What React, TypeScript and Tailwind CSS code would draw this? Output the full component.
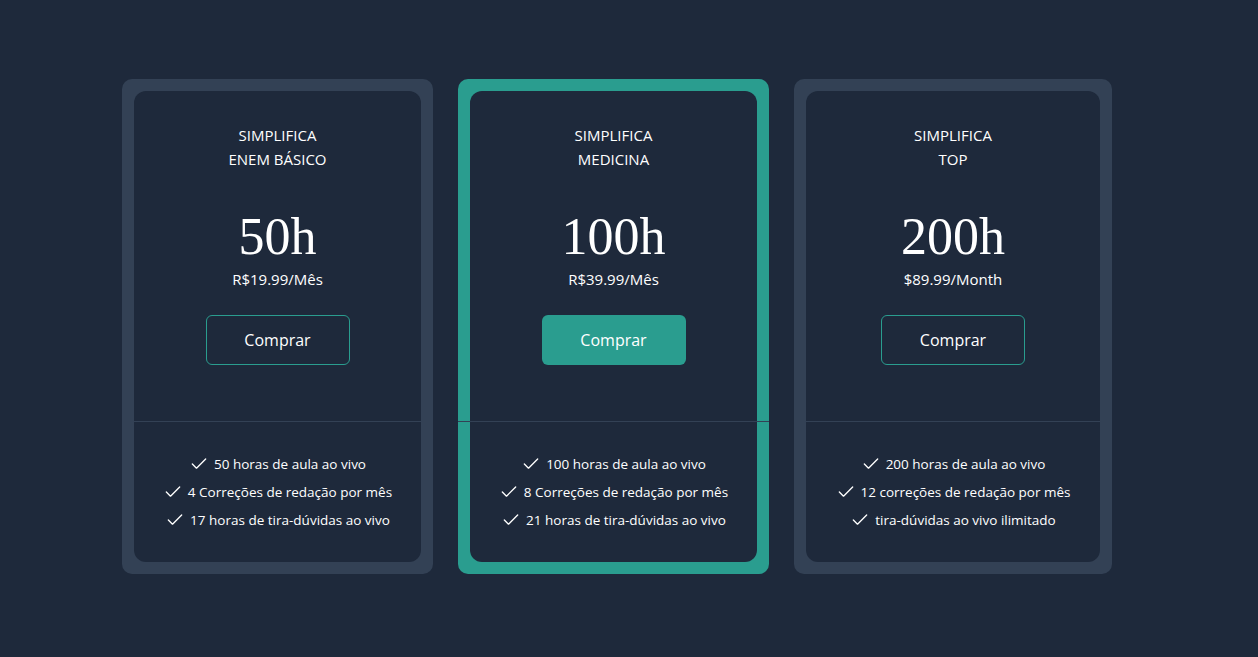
import { Check } from "lucide-react"

type Plan = {
  line1: string
  line2: string
  hours: string
  price: string
  features: string[]
  featured?: boolean
  width: string
}

const plans: Plan[] = [
  {
    line1: "SIMPLIFICA",
    line2: "ENEM BÁSICO",
    hours: "50h",
    price: "R$19.99/Mês",
    features: ["50 horas de aula ao vivo", "4 Correções de redação por mês", "17 horas de tira-dúvidas ao vivo"],
    width: "w-[311px]",
  },
  {
    line1: "SIMPLIFICA",
    line2: "MEDICINA",
    hours: "100h",
    price: "R$39.99/Mês",
    features: ["100 horas de aula ao vivo", "8 Correções de redação por mês", "21 horas de tira-dúvidas ao vivo"],
    featured: true,
    width: "w-[311px]",
  },
  {
    line1: "SIMPLIFICA",
    line2: "TOP",
    hours: "200h",
    price: "$89.99/Month",
    features: ["200 horas de aula ao vivo", "12 correções de redação por mês", "tira-dúvidas ao vivo ilimitado"],
    width: "w-[318px]",
  },
]

function PlanCard({ plan }: { plan: Plan }) {
  return (
    <div
      className={`${plan.width} rounded-[10px] p-3 ${plan.featured ? "bg-[#2a9d8f]" : "bg-[#334155]"}`}
    >
      <div className="bg-[#1e293b] rounded-xl">
        <div className="flex flex-col items-center pt-8 pb-[56px]">
          <div className="text-[15px] leading-6 text-white text-center">
            <div>{plan.line1}</div>
            <div>{plan.line2}</div>
          </div>
          <div className="mt-9 h-[60px] leading-[60px] text-[52px] text-white [font-family:'Liberation_Serif',serif] [font-variant-numeric:oldstyle-nums]">
            {plan.hours}
          </div>
          <div className="text-[15px] leading-6 text-white">{plan.price}</div>
          <button
            className={`mt-6 w-[144px] h-[50px] rounded-md text-[16px] text-white ${
              plan.featured ? "bg-[#2a9d8f]" : "border border-[#2a9d8f]"
            }`}
          >
            Comprar
          </button>
        </div>
        <div className="-mx-3 h-px bg-[#334155]" />
        <ul className="flex flex-col items-center pt-7 pb-7">
          {plan.features.map((f) => (
            <li key={f} className="flex items-center gap-[5px] h-7 text-[13.5px] text-white">
              <Check className="w-5 h-5" strokeWidth={1.6} />
              {f}
            </li>
          ))}
        </ul>
      </div>
    </div>
  )
}

export default function App() {
  return (
    <div className="min-h-screen bg-[#1e293b] pt-[79px] pl-[122px] [font-family:'Open_Sans','Noto_Sans',sans-serif]">
      <div className="flex gap-[25px]">
        {plans.map((p) => (
          <PlanCard key={p.hours} plan={p} />
        ))}
      </div>
    </div>
  )
}
